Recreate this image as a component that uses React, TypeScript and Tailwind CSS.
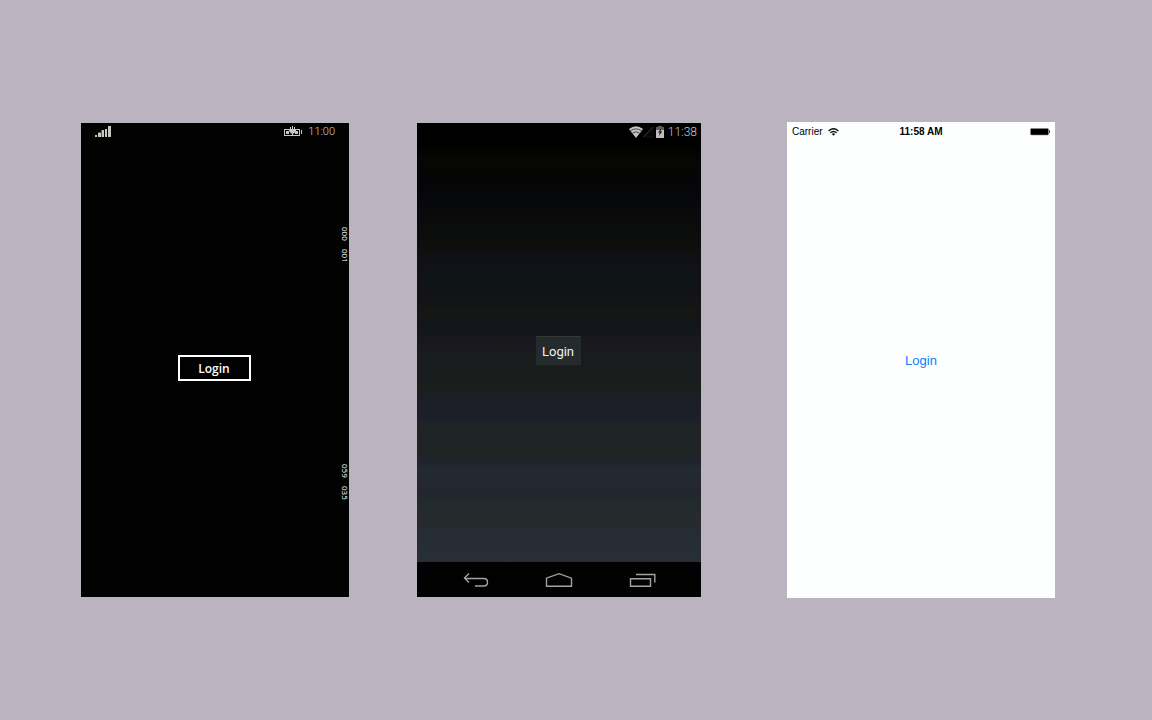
import React from "react";

function SignalIcon() {
  return (
    <svg width="16" height="12" viewBox="0 0 16 12" fill="#c6c6c2" shapeRendering="crispEdges" aria-hidden="true">
      <rect x="0" y="9" width="2" height="2" />
      <rect x="3" y="6" width="3" height="1" fill="#55554f" />
      <rect x="3" y="7" width="3" height="4" />
      <rect x="6" y="4" width="1" height="7" fill="#55554f" />
      <rect x="7" y="4" width="2" height="7" />
      <rect x="10" y="3" width="2" height="8" />
      <rect x="13" y="0" width="3" height="11" />
    </svg>
  );
}

function ChargingIcon() {
  return (
    <svg width="18" height="12" viewBox="0 0 18 12" fill="#c6c6c2" aria-hidden="true">
      <path d="M0 3h5v1H1v5h14V4h-4V3h5v7H0z" />
      <rect x="2" y="5" width="3" height="3" />
      <rect x="11" y="5" width="3" height="3" />
      <rect x="17" y="4" width="1" height="4" />
      <path d="M6 1h1v2h3V1h1v2h1v2l-2 2.500H9V9H8V7.500H7L5 5V3h1z" />
      <rect x="8" y="0" width="1" height="4" />
    </svg>
  );
}

function AndroidWifiIcon() {
  return (
    <svg width="14" height="12" viewBox="0 0 14 12" aria-hidden="true">
      <path d="M0 3Q7-2.500 14 3L7 12z" fill="#c2c2c0" />
      <path d="M1.500 4.800Q7 1 12.500 4.800M3.500 7Q7 4.700 10.500 7" fill="none" stroke="#2a2a2a" strokeWidth=".8" />
    </svg>
  );
}

function NoSignalIcon() {
  return (
    <svg width="11" height="12" viewBox="0 0 11 12" aria-hidden="true">
      <path d="M.5 11L10 1v10z" fill="#070707" stroke="#141414" strokeWidth=".8" />
      <path d="M.5 11L10 1" stroke="#444" strokeWidth=".8" />
    </svg>
  );
}

function AndroidBatteryIcon() {
  return (
    <svg width="8" height="12" viewBox="0 0 8 12" aria-hidden="true">
      <path d="M2 0h4v1h2v4H0V1h2z" fill="#5c5c5a" />
      <rect y="4" width="8" height="8" fill="#bdbdbb" />
      <path d="M5.500 2L2 6.500h1.800L2.800 10 6.300 5.500H4.500z" fill="#151515" />
    </svg>
  );
}

function IosWifiIcon() {
  return (
    <svg width="11" height="8" viewBox="0 0 11 8" fill="none" stroke="#111" strokeWidth="1.400" aria-hidden="true">
      <path d="M.6 2.900Q5.500-1.500 10.400 2.900M2.400 4.800Q5.500 2 8.600 4.800" />
      <path d="M3.800 5.900Q5.500 4.600 7.200 5.900L5.500 7.800z" fill="#111" stroke="none" />
    </svg>
  );
}

function IosBatteryIcon() {
  return (
    <svg width="20" height="8" viewBox="0 0 20 8" aria-hidden="true">
      <rect x=".5" y=".5" width="18" height="6.500" rx="1" fill="#000" stroke="#888" strokeWidth=".6" />
      <path d="M19 2q1 .3 1 1.700t-1 1.700z" fill="#222" />
    </svg>
  );
}

const navIcon = {
  width: 28,
  height: 16,
  viewBox: "0 0 28 16",
  fill: "none",
  stroke: "#a3a3a3",
  strokeWidth: 1.4,
  "aria-hidden": true,
} as const;

function WindowsPhone() {
  return (
    <section aria-label="Windows Phone" className="relative flex aspect-[268/474] flex-[268_1_0%] flex-col bg-[#020203] text-white">
      <header className="flex h-4 items-center justify-between px-3.5 pt-0.5 text-[#d0d0cc]">
        <SignalIcon />
        <div className="flex items-center gap-1.5">
          <ChargingIcon />
          <time className="font-[Roboto,sans-serif] text-[11px] leading-4 font-light">11:00</time>
        </div>
      </header>
      <main className="flex flex-1 items-center justify-center pr-0.5">
        <button className="h-[26px] w-[73px] border-2 border-white pt-0.5 font-['Open_Sans',sans-serif] text-xs leading-4 font-semibold">
          Login
        </button>
      </main>
      <div className="absolute top-[22%] right-0 flex gap-2 font-['Open_Sans',sans-serif] text-[8px] leading-[8px] font-medium text-white [writing-mode:vertical-rl]">
        <span>000</span>
        <span>001</span>
      </div>
      <div className="absolute top-[72%] right-0 flex gap-2 font-['Open_Sans',sans-serif] text-[8px] leading-[8px] font-medium text-white [writing-mode:vertical-rl]">
        <span>059</span>
        <span>035</span>
      </div>
    </section>
  );
}

function AndroidPhone() {
  return (
    <section
      aria-label="Android"
      className="flex aspect-[284/474] flex-[284_1_0%] flex-col bg-[linear-gradient(#000_0%,#000_4%,#060603_8%,#050506_13%,#05070c_15%,#0a0a0b_19%,#0b0f0c_25%,#0f0f0c_26.400%,#101016_28%,#0e1416_33%,#121315_36.500%,#141713_40%,#11151e_43%,#1a181d_46.400%,#181c1e_49%,#191c1d_53.400%,#1c1e1c_56%,#1b1e26_57.600%,#1b1f28_62%,#1f2427_64%,#202424_70%,#20242e_71.700%,#222931_73.200%,#22262f_78%,#242b2c_81.600%,#272a2c_84.800%,#272b35_86%,#262d34_89%,#282f36_92.600%)] font-[Roboto,sans-serif]"
    >
      <header className="flex h-[17px] items-center justify-end pr-1 text-[#c8c8c6]">
        <AndroidWifiIcon />
        <NoSignalIcon />
        <span className="ml-0.5 flex items-center gap-1">
          <AndroidBatteryIcon />
          <time className="pt-px text-xs leading-4 font-light">11:38</time>
        </span>
      </header>
      <main className="flex flex-1 items-center justify-center pr-0.5">
        <button className="h-[30px] w-[45px] rounded-[1px] border-t border-b border-t-[#343738] border-b-[#1c1d20] bg-[#252a2c] pt-0.5 text-[13px] leading-4 text-[#f1f1f1]">
          Login
        </button>
      </main>
      <nav className="grid h-[35px] grid-cols-3 bg-[#020203] px-[17px]">
        <button aria-label="Back" className="flex items-center justify-center">
          <svg {...navIcon}>
            <path d="M7 1.500L2.500 6 7 10.500M2.500 6.500H22q3.500 0 3.500 3.700T22 14H13" />
          </svg>
        </button>
        <button aria-label="Home" className="flex items-center justify-center">
          <svg {...navIcon}>
            <path d="M1.500 14.200v-8L14 1.700l12.500 4.500v8z" />
          </svg>
        </button>
        <button aria-label="Recent apps" className="flex items-center justify-center">
          <svg {...navIcon}>
            <path d="M2.500 6.700h20v7.500h-20zM8 2.500H26.800v8" />
          </svg>
        </button>
      </nav>
    </section>
  );
}

function IPhone() {
  return (
    <section
      aria-label="iPhone"
      className="ml-[18px] flex aspect-[268/476] flex-[268_1_0%] flex-col bg-[#fdfffe] pb-4 font-['Liberation_Sans',sans-serif] text-black"
    >
      <header className="grid h-[18px] grid-cols-[1fr_auto_1fr] items-center px-[5px] pt-0.5 text-[10px] leading-3">
        <span className="flex items-center gap-[5px]">
          Carrier
          <IosWifiIcon />
        </span>
        <time className="font-bold">11:58 AM</time>
        <span className="flex justify-end">
          <IosBatteryIcon />
        </span>
      </header>
      <main className="flex flex-1 items-center justify-center">
        <button className="text-[13px] leading-4 text-[#0a7eff]">Login</button>
      </main>
    </section>
  );
}

export default function App() {
  return (
    <div className="flex min-h-screen items-center gap-[68px] bg-[#bbb3bf] pr-[97px] pl-[81px]">
      <WindowsPhone />
      <AndroidPhone />
      <IPhone />
    </div>
  );
}
